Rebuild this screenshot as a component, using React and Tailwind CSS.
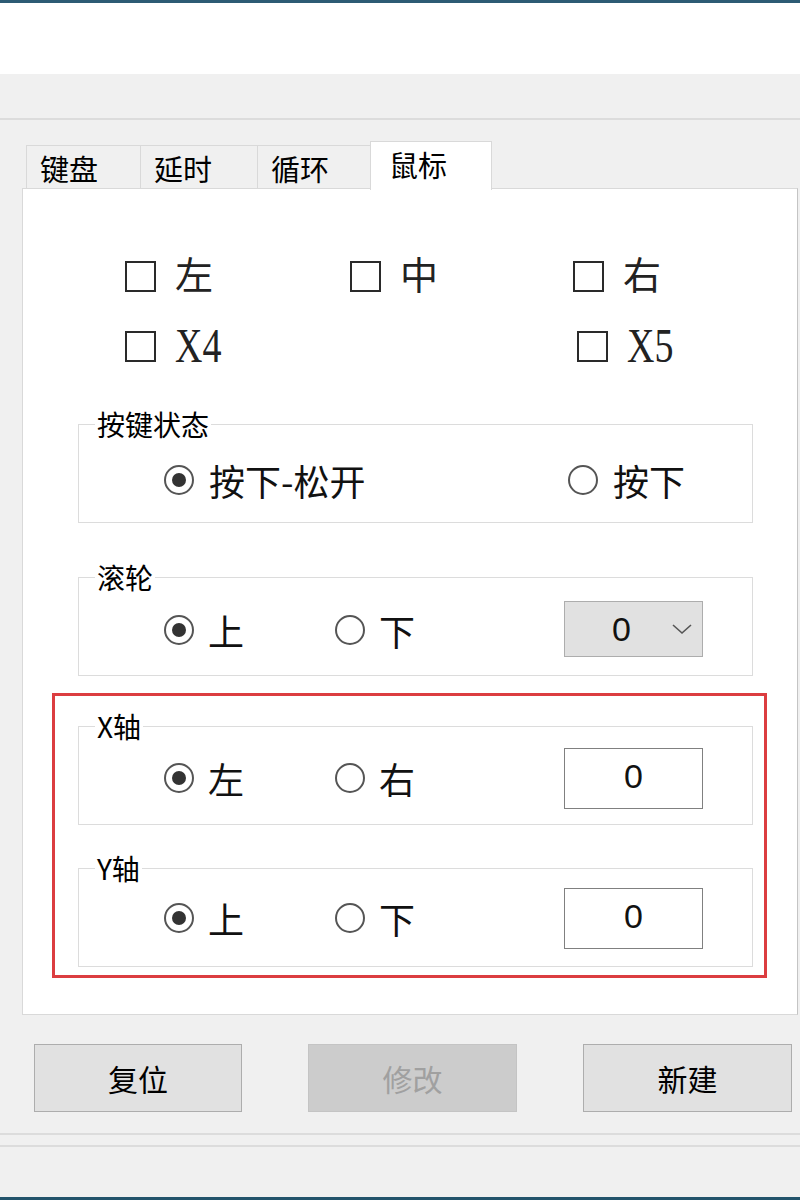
import React from 'react'

const cjk = "font-['Noto_Sans_CJK_SC',sans-serif]"
const serif = "font-['Liberation_Serif','Noto_Sans_CJK_SC',serif]"

function Check({ label, tall }) {
  return (
    <div className="flex items-center h-[40px]">
      <div className="w-[31px] h-[31px] border-2 border-[#2a2a2a] bg-white" />
      <span
        className={`ml-[19px] text-[38px] leading-none text-[#222] ${serif} ${tall ? 'inline-block scale-y-125' : ''}`}
      >
        {label}
      </span>
    </div>
  )
}

function Radio({ label, checked, className = '', gap = 'gap-[15px]' }) {
  return (
    <div className={`flex items-center ${gap} ${className}`}>
      <div className="w-[30px] h-[30px] rounded-full border-2 border-[#555] bg-white flex items-center justify-center">
        {checked && <div className="w-[14px] h-[14px] rounded-full bg-[#333]" />}
      </div>
      <span className="text-[36px] leading-none text-[#111]">{label}</span>
    </div>
  )
}

function Group({ title, children, className = '' }) {
  return (
    <div className={`relative w-[675px] h-[99px] border border-[#dcdcdc] ${className}`}>
      <span className="absolute left-[16px] -top-[16px] bg-white px-[2px] text-[28px] leading-[30px] text-black">
        {title}
      </span>
      {children}
    </div>
  )
}

function ValueBox({ value }) {
  return (
    <div className="w-[139px] h-[61px] border border-[#808080] bg-white flex items-center justify-center">
      <span className="-mt-[5px] text-[34px] leading-none font-['Liberation_Sans',sans-serif] text-[#111]">{value}</span>
    </div>
  )
}

export default function App() {
  const tabs = [
    { name: '键盘', w: 'w-[114px]' },
    { name: '延时', w: 'w-[117px]' },
    { name: '循环', w: 'w-[113px]' },
  ]

  return (
    <div className={`w-[800px] h-[1200px] bg-[#f0f0f0] flex flex-col overflow-hidden ${cjk}`}>
      <div className="h-[3px] bg-[#2d5b74]" />
      <div className="h-[71px] bg-white" />
      <div className="h-[44px]" />
      <div className="h-[2px] bg-[#dcdcdc]" />
      <div className="h-[21px]" />

      {/* tab strip */}
      <div className="flex items-end h-[47px] pl-[26px]">
        {tabs.map((t) => (
          <div
            key={t.name}
            className={`${t.w} h-[43px] border-l border-t border-[#d9d9d9] bg-[#f0f0f0] flex items-center pl-[13px] pt-[2px] text-[29px] leading-none text-black`}
          >
            {t.name}
          </div>
        ))}
        <div className="relative z-10 w-[122px] h-[49px] -mb-[2px] border-l border-t border-r border-[#d9d9d9] bg-white flex items-center pl-[18px] pb-[4px] text-[29px] leading-none text-black">
          鼠标
        </div>
      </div>

      {/* tab page */}
      <div className="ml-[22px] w-[776px] h-[827px] bg-white border border-[#d9d9d9] border-r-[#c4c4c4] flex flex-col">
        <div className="pt-[67px] pl-[102px]">
          <div className="grid grid-cols-[225px_223px_auto]">
            <Check label="左" />
            <Check label="中" />
            <Check label="右" />
          </div>
          <div className="grid grid-cols-[225px_223px_auto] mt-[30px]">
            <Check label="X4" tall />
            <div />
            <div className="ml-[4px]">
              <Check label="X5" tall />
            </div>
          </div>
        </div>

        <Group title="按键状态" className="ml-[55px] mt-[58px]">
          <div className="flex items-center h-full pl-[85px] pt-[12px]">
            <Radio checked label="按下-松开" className="w-[404px]" />
            <Radio label="按下" />
          </div>
        </Group>

        <Group title="滚轮" className="ml-[55px] mt-[54px]">
          <div className="flex items-center h-full pl-[85px] pt-[7px]">
            <Radio checked label="上" gap="gap-[14px]" className="w-[171px]" />
            <Radio label="下" gap="gap-[14px]" className="w-[229px]" />
            <div className="w-[139px] h-[56px] -mt-[3px] bg-[#e1e1e1] border border-[#adadad] flex items-center pl-[47px] pr-[9px]">
              <span className="text-[34px] leading-none font-['Liberation_Sans',sans-serif] text-[#111]">0</span>
              <svg className="ml-auto" width="22" height="12" viewBox="0 0 22 12" fill="none">
                <polyline points="2,2 11,10 20,2" stroke="#555" strokeWidth="1.6" />
              </svg>
            </div>
          </div>
        </Group>

        <div className="ml-[29px] mt-[17px] w-[715px] h-[285px] border-[3px] border-[#dc3d40] pt-[30px] pl-[23px]">
          <Group title="X轴">
            <div className="flex items-center h-full pl-[85px] pt-[5px]">
              <Radio checked label="左" gap="gap-[14px]" className="w-[171px]" />
              <Radio label="右" gap="gap-[14px]" className="w-[229px]" />
              <ValueBox value="0" />
            </div>
          </Group>
          <Group title="Y轴" className="mt-[43px]">
            <div className="flex items-center h-full pl-[85px] pt-[1px]">
              <Radio checked label="上" gap="gap-[14px]" className="w-[171px]" />
              <Radio label="下" gap="gap-[14px]" className="w-[229px]" />
              <ValueBox value="0" />
            </div>
          </Group>
        </div>
      </div>

      {/* buttons */}
      <div className="flex mt-[29px] pl-[34px] gap-[66px]">
        <button className="w-[208px] h-[68px] bg-[#e1e1e1] border border-[#adadad] text-[30px] leading-none text-black">
          复位
        </button>
        <button className="w-[209px] h-[68px] bg-[#cccccc] border border-[#c4c4c4] text-[30px] leading-none text-[#a0a0a0]">
          修改
        </button>
        <button className="w-[209px] h-[68px] bg-[#e1e1e1] border border-[#adadad] text-[30px] leading-none text-black">
          新建
        </button>
      </div>

      <div className="mt-[21px] h-[2px] bg-[#dcdcdc]" />
      <div className="mt-[10px] h-[2px] bg-[#dcdcdc]" />
      <div className="flex-1" />
      <div className="h-[3px] bg-[#22536b]" />
    </div>
  )
}
